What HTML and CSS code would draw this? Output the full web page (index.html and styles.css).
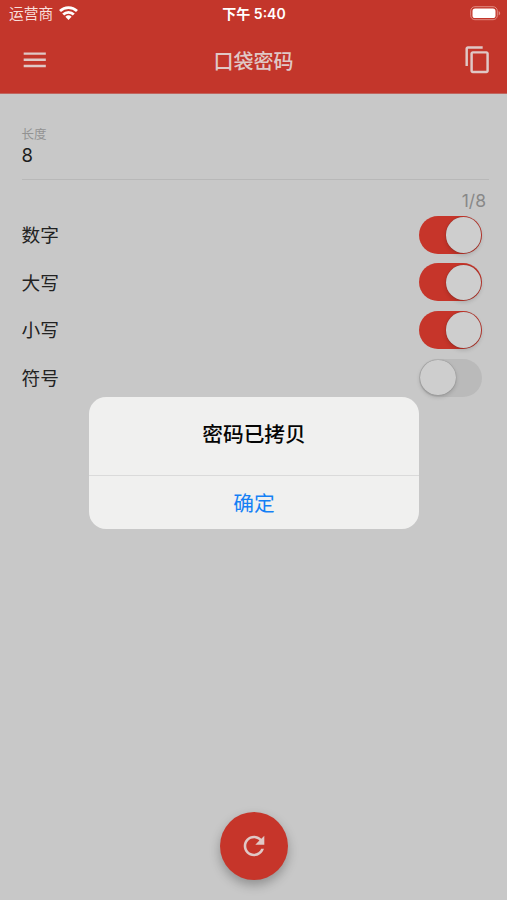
FILE: index.html
```
<!DOCTYPE html>
<html lang="zh-CN">
<head>
<meta charset="utf-8">
<title>口袋密码</title>
<link rel="stylesheet" href="styles.css">
</head>
<body>
<div class="app">
  <header class="header">
    <div class="status">
      <div class="carrier"><span>运营商</span>
        <svg class="wifi" viewBox="0 0 19 14"><g fill="none" stroke="#fff" stroke-width="2.8"><path d="M1 5.1a12.2 12.2 0 0 1 17 0"/><path d="M4.2 8.6a7.6 7.6 0 0 1 10.6 0"/></g><path fill="#fff" d="M6.4 10.7a4.5 4.5 0 0 1 6.2 0L9.5 13.9z"/></svg>
      </div>
      <div class="time">下午 5:40</div>
      <svg class="battery" viewBox="0 0 31 15"><rect x=".7" y=".7" width="26.6" height="13" rx="4.2" fill="none" stroke="#e08a82" stroke-width="1"/><rect x="2.5" y="2.5" width="23" height="9.5" rx="2.6" fill="#fff"/><path d="M28.7 5v4.4c2-.8 2-3.600 0-4.400z" fill="#e08a82"/></svg>
    </div>
    <div class="toolbar">
      <svg class="icon" viewBox="0 0 24 24"><path d="M3 18h18v-2H3v2zm0-5h18v-2H3v2zm0-7v2h18V6H3z"/></svg>
      <h1 class="title">口袋密码</h1>
      <svg class="icon" viewBox="0 0 24 24"><path d="M16 1H4c-1.100 0-2 .9-2 2v14h2V3h12V1zm3 4H8c-1.100 0-2 .9-2 2v14c0 1.100.9 2 2 2h11c1.100 0 2-.9 2-2V7c0-1.100-.9-2-2-2zm0 16H8V7h11v14z"/></svg>
    </div>
  </header>
  <main class="content">
    <div class="field">
      <div class="label">长度</div>
      <div class="value">8</div>
    </div>
    <div class="counter">1/8</div>
    <div class="row"><span>数字</span><div class="switch on"><i class="knob"></i></div></div>
    <div class="row"><span>大写</span><div class="switch on"><i class="knob"></i></div></div>
    <div class="row"><span>小写</span><div class="switch on"><i class="knob"></i></div></div>
    <div class="row"><span>符号</span><div class="switch"><i class="knob"></i></div></div>
  </main>
  <div class="fab">
    <svg viewBox="0 0 512 512"><path d="M256 388c-72.597 0-132-59.405-132-132 0-72.601 59.403-132 132-132 36.300 0 69.299 15.400 92.406 39.601L278 234h154V80l-51.698 51.702C348.406 99.798 304.406 80 256 80c-96.797 0-176 79.203-176 176s78.094 176 176 176c81.045 0 148.287-54.134 169.401-128H378.850c-18.745 49.561-67.138 84-122.850 84z"/></svg>
  </div>
  <div class="alert">
    <div class="message">密码已拷贝</div>
    <div class="confirm">确定</div>
  </div>
</div>
</body>
</html>
```

FILE: styles.css
```
* { box-sizing: border-box; }
body {
  margin: 0;
  font-family: Inter, "Noto Sans CJK SC", sans-serif;
  background: #c8c8c8;
}
.app {
  position: relative;
  height: 900px;
  overflow: hidden;
  background: #c8c8c8;
}
.header {
  height: 94px;
  background: #c3362b;
  border-bottom: 1px solid #c0665f;
}
.status {
  display: grid;
  grid-template-columns: 1fr auto 1fr;
  align-items: center;
  height: 27px;
  padding: 0 8px 0 9px;
  color: #fff;
  font-size: 14px;
  line-height: 27px;
}
.carrier {
  display: flex;
  align-items: center;
  gap: 6px;
  font-size: 14.7px;
  color: #f8dfdc;
}
.carrier span { padding-top: 1px; line-height: 26px; }
.wifi { width: 19px; height: 14px; margin-top: -1px; }
.time { font-weight: 600; }
.battery { width: 31px; height: 15px; justify-self: end; margin-right: -2px; }
.toolbar {
  display: flex;
  align-items: center;
  justify-content: space-between;
  height: 66px;
  padding: 0 15px 0 20px;
}
.icon { width: 29.5px; height: 29.5px; fill: #e0c8c6; }
.title {
  margin: 0;
  padding: 3px 5px 0 0;
  font-size: 20px;
  font-weight: 500;
  line-height: 30px;
  color: #e0c8c6;
}
.content { padding: 33px 18px 0 21.5px; }
.field {
  height: 53px;
  border-bottom: 1px solid #b8b8b8;
}
.label { font-size: 12.5px; line-height: 16px; color: #929292; }
.value { font-size: 18.5px; line-height: 25px; color: #1d1d1d; }
.counter {
  height: 31px;
  padding: 5px 3px 0 0;
  text-align: right;
  font-size: 17.5px;
  line-height: 31px;
  color: #888;
}
.row {
  display: flex;
  align-items: center;
  justify-content: space-between;
  height: 47.6px;
  padding-right: 7px;
  font-size: 18.7px;
  color: #222;
}
.row span { padding-bottom: 2px; }
.switch {
  display: flex;
  align-items: center;
  width: 63px;
  height: 38px;
  padding: 1px;
  border-radius: 19px;
  background: #bababa;
}
.switch.on { justify-content: flex-end; background: #c6352a; }
.knob {
  width: 35.5px;
  height: 35.5px;
  border-radius: 50%;
  background: #cecece;
  box-shadow: 0 2px 4px rgba(0, 0, 0, .16), 0 0 1px rgba(0, 0, 0, .4);
}
.fab {
  position: absolute;
  left: 220px;
  top: 812px;
  display: flex;
  align-items: center;
  justify-content: center;
  width: 68px;
  height: 68px;
  border-radius: 50%;
  background: #c6352a;
  box-shadow: 0 5px 11px rgba(0, 0, 0, .28);
}
.fab svg { width: 30px; height: 30px; fill: #e0c8c6; }
.alert {
  position: absolute;
  left: 89px;
  top: 397px;
  width: 330px;
  height: 132px;
  border-radius: 17px;
  background: #f0f0ef;
  text-align: center;
  overflow: hidden;
}
.message {
  height: 79px;
  border-bottom: 1px solid #dadada;
  font-size: 20.7px;
  font-weight: 500;
  line-height: 75px;
  color: #050505;
}
.confirm { font-size: 20.7px; line-height: 56px; color: #1580f5; }
```
